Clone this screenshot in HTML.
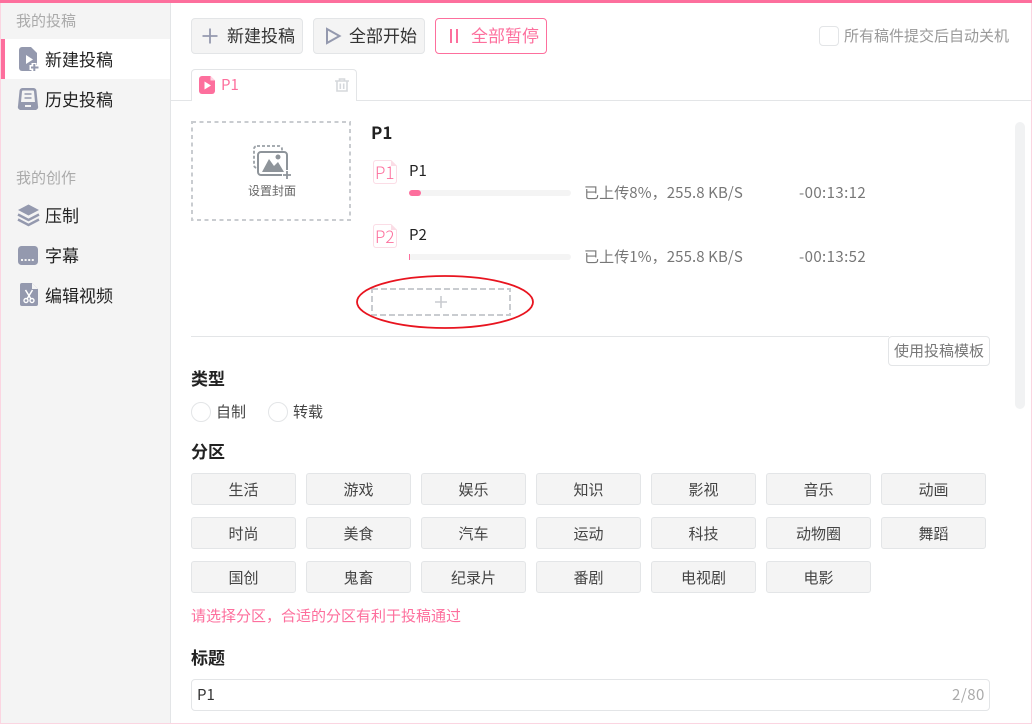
<!DOCTYPE html>
<html lang="zh">
<head>
<meta charset="utf-8">
<style>
*{box-sizing:border-box;margin:0;padding:0}
html,body{width:1032px;height:724px;overflow:hidden;background:#fff}
body{position:relative;font-family:"Noto Sans CJK SC","Liberation Sans",sans-serif;color:#222}
.a{position:absolute;white-space:nowrap}
.t{position:absolute;white-space:nowrap;line-height:20px}
.btn{position:absolute;top:18px;height:36px;width:112px;border:1px solid #e3e5e7;border-radius:4px;background:#f4f4f4}
.cat{position:absolute;width:105px;height:32px;border:1px solid #e3e5e7;border-radius:3px;background:#f4f4f4;font-size:15px;line-height:31px;text-align:center;color:#444}
.lab{font-size:17px;font-weight:700;color:#222}
svg{position:absolute;overflow:visible}
</style>
</head>
<body>
<!-- sidebar -->
<div class="a" style="left:0;top:0;width:171px;height:724px;background:#f4f4f4;border-right:1px solid #e3e5e7"></div>
<div class="a" style="left:1px;top:39px;width:169px;height:40px;background:#fff"></div>
<div class="a" style="left:1px;top:39px;width:4px;height:40px;background:#fd6f9d"></div>

<div class="t" style="left:16px;top:11px;font-size:15px;color:#aaa">我的投稿</div>
<div class="t" style="left:45px;top:49px;font-size:17px;color:#222">新建投稿</div>
<div class="t" style="left:45px;top:89px;font-size:17px;color:#222">历史投稿</div>
<div class="t" style="left:16px;top:168px;font-size:15px;color:#aaa">我的创作</div>
<div class="t" style="left:45px;top:205px;font-size:17px;color:#222">压制</div>
<div class="t" style="left:45px;top:245px;font-size:17px;color:#222">字幕</div>
<div class="t" style="left:45px;top:285px;font-size:17px;color:#222">编辑视频</div>

<!-- sidebar icons -->
<svg style="left:19px;top:47px" width="20" height="24" viewBox="0 0 20 24">
  <path d="M3 0H12L18 6V21A3 3 0 0 1 15 24H3A3 3 0 0 1 0 21V3A3 3 0 0 1 3 0Z" fill="#9499ae"/>
  <path d="M7 8L14 12.500L7 17Z" fill="#fff"/>
  <path d="M15 16V25M10.500 20.500H20" stroke="#fff" stroke-width="5"/>
  <path d="M15.300 17V24M12 20.500H19.500" stroke="#9499ae" stroke-width="2"/>
</svg>
<svg style="left:18px;top:88px" width="20" height="22" viewBox="0 0 20 22">
  <path d="M4.500 0H15.500A3 3 0 0 1 18.500 3L20 18A3 3 0 0 1 17 22H3A3 3 0 0 1 0 18L1.500 3A3 3 0 0 1 4.500 0Z" fill="#9499ae"/>
  <path d="M5 2.500H15A1 1 0 0 1 16 3.500L17 14H3L4 3.500A1 1 0 0 1 5 2.500Z" fill="#f4f4f4"/>
  <path d="M6.500 6H13.500M6.500 10H13.500" stroke="#9499ae" stroke-width="1.600"/>
  <rect x="7" y="17" width="6" height="2" fill="#f4f4f4"/>
</svg>
<svg style="left:17px;top:204px" width="23" height="23" viewBox="0 0 23 23">
  <path d="M11.500 0.500L22 6L11.500 11.500L1 6Z" fill="#9499ae"/>
  <path d="M1 10.500L11.500 16L22 10.500" fill="none" stroke="#9499ae" stroke-width="2.400"/>
  <path d="M1 15.500L11.500 21L22 15.500" fill="none" stroke="#9499ae" stroke-width="2.400"/>
</svg>
<svg style="left:18px;top:246px" width="20" height="19" viewBox="0 0 20 19">
  <rect width="20" height="19" rx="3.500" fill="#9499ae"/>
  <path d="M3 14H17" stroke="#f4f4f4" stroke-width="2" stroke-dasharray="2 1.600"/>
</svg>
<svg style="left:20px;top:283px" width="18" height="23" viewBox="0 0 18 23">
  <path d="M2 0H12L18 6V21A2 2 0 0 1 16 23H2A2 2 0 0 1 0 21V2A2 2 0 0 1 2 0Z" fill="#9499ae"/>
  <path d="M12 0L18 6H12Z" fill="#f4f4f4"/>
  <path d="M5.500 7L11 16M12.500 7L7 16" stroke="#fff" stroke-width="1.500"/>
  <circle cx="6" cy="17.500" r="2" fill="none" stroke="#fff" stroke-width="1.400"/>
  <circle cx="12" cy="17.500" r="2" fill="none" stroke="#fff" stroke-width="1.400"/>
</svg>

<!-- toolbar -->
<div class="btn" style="left:191px"></div>
<div class="btn" style="left:313px"></div>
<div class="btn" style="left:435px;background:#fff;border-color:#fd6f9d"></div>
<svg style="left:202px;top:28px" width="16" height="16" viewBox="0 0 16 16"><path d="M8 0.500V15.500M0.500 8H15.500" stroke="#9499ae" stroke-width="1.800"/></svg>
<svg style="left:326px;top:28px" width="15" height="16" viewBox="0 0 15 16"><path d="M1 1L13.500 8L1 15Z" fill="none" stroke="#9499ae" stroke-width="2"/></svg>
<svg style="left:449px;top:29px" width="10" height="14" viewBox="0 0 10 14"><path d="M2 0V14M8 0V14" stroke="#fd6f9d" stroke-width="2"/></svg>
<div class="t" style="left:227px;top:25px;font-size:17px;color:#333">新建投稿</div>
<div class="t" style="left:349px;top:25px;font-size:17px;color:#333">全部开始</div>
<div class="t" style="left:471px;top:25px;font-size:17px;color:#fd6f9d">全部暂停</div>
<div class="a" style="left:819px;top:26px;width:20px;height:20px;border:1px solid #e3e5e7;border-radius:4px;background:#fff"></div>
<div class="t" style="left:844px;top:26px;font-size:15px;color:#999">所有稿件提交后自动关机</div>

<!-- tab -->
<div class="a" style="left:171px;top:100px;width:861px;height:1px;background:#e3e5e7"></div>
<div class="a" style="left:191px;top:69px;width:166px;height:32px;border:1px solid #e3e5e7;border-bottom:none;border-radius:4px 4px 0 0;background:#fff"></div>
<svg style="left:199px;top:76px" width="17" height="18" viewBox="0 0 17 18">
  <path d="M3 0H11.500L16 4.500V15A3 3 0 0 1 13 18H3A3 3 0 0 1 0 15V3A3 3 0 0 1 3 0Z" fill="#fd6f9d"/>
  <path d="M11.500 0L16 4.500H11.500Z" fill="#fff" opacity=".7"/>
  <path d="M5.500 5.500L12 9.500L5.500 13.500Z" fill="#fff"/>
</svg>
<div class="t" style="left:221px;top:75px;font-size:15px;color:#fd6f9d">P1</div>
<svg style="left:335px;top:78px" width="14" height="14" viewBox="0 0 14 14">
  <path d="M0 3H14M4.500 3V1H9.500V3" fill="none" stroke="#d5d8dc" stroke-width="1.600"/>
  <path d="M2 3.500V13H12V3.500M5.300 5.500V11M8.700 5.500V11" fill="none" stroke="#d5d8dc" stroke-width="1.600"/>
</svg>

<!-- cover -->
<svg style="left:191px;top:121px" width="160" height="100"><rect x="1" y="1" width="158" height="98" fill="none" stroke="#c9ccd0" stroke-width="2" stroke-dasharray="4 3.500"/></svg>
<svg style="left:253px;top:145px" width="38" height="34" viewBox="0 0 38 34">
  <rect x="1" y="1" width="28" height="22" rx="3" fill="none" stroke="#9aa0a6" stroke-width="1.800" stroke-dasharray="3 2"/>
  <rect x="5" y="7" width="29" height="23" rx="3" fill="#fff" stroke="#8e949a" stroke-width="2"/>
  <path d="M9 27L16 14L21 21L25 17L31 27Z" fill="#8e949a"/>
  <circle cx="25" cy="12" r="2.500" fill="#8e949a"/>
  <path d="M34 25V35M29 30H38" stroke="#fff" stroke-width="4"/>
  <path d="M34 26V34M30 30H38" stroke="#8e949a" stroke-width="1.800"/>
</svg>
<div class="t" style="left:248px;top:181px;font-size:12px;color:#666">设置封面</div>

<!-- files -->
<div class="t" style="left:371px;top:122px;font-size:17px;font-weight:700;color:#222">P1</div>
<svg style="left:373px;top:160px" width="24" height="24" viewBox="0 0 24 24"><path d="M3 .5H18L23.500 6V21A2.500 2.500 0 0 1 21 23.500H3A2.500 2.500 0 0 1 .5 21V3A2.500 2.500 0 0 1 3 .5Z" fill="#fff" stroke="#fbdde6"/><path d="M18 .5V6H23.500Z" fill="#fbdde6"/></svg>
<svg style="left:373px;top:224px" width="24" height="24" viewBox="0 0 24 24"><path d="M3 .5H18L23.500 6V21A2.500 2.500 0 0 1 21 23.500H3A2.500 2.500 0 0 1 .5 21V3A2.500 2.500 0 0 1 3 .5Z" fill="#fff" stroke="#fbdde6"/><path d="M18 .5V6H23.500Z" fill="#fbdde6"/></svg>
<div class="t" style="left:375px;top:162px;font-size:17px;font-weight:300;color:#fd6f9d">P1</div>
<div class="t" style="left:375px;top:226px;font-size:17px;font-weight:300;color:#fd6f9d">P2</div>
<div class="t" style="left:409px;top:161px;font-size:15px;color:#222">P1</div>
<div class="t" style="left:409px;top:225px;font-size:15px;color:#222">P2</div>
<div class="a" style="left:409px;top:190px;width:162px;height:6px;border-radius:3px;background:#f4f4f4"></div>
<div class="a" style="left:409px;top:190px;width:12px;height:6px;border-radius:3px;background:#fd6f9d"></div>
<div class="a" style="left:409px;top:254px;width:162px;height:6px;border-radius:3px;background:#f4f4f4"></div>
<div class="a" style="left:409px;top:254px;width:1px;height:6px;background:#fd6f9d"></div>
<div class="t" style="left:584px;top:183px;font-size:15px;letter-spacing:.1px;color:#777">已上传8%，255.8 KB/S</div>
<div class="t" style="left:584px;top:247px;font-size:15px;letter-spacing:.1px;color:#777">已上传1%，255.8 KB/S</div>
<div class="t" style="left:799px;top:183px;font-size:15px;letter-spacing:.4px;color:#777">-00:13:12</div>
<div class="t" style="left:799px;top:247px;font-size:15px;letter-spacing:.4px;color:#777">-00:13:52</div>

<!-- add box and annotation -->
<svg style="left:371px;top:288px" width="140" height="28"><rect x="1" y="1" width="138" height="26" fill="none" stroke="#c9ccd0" stroke-width="2" stroke-dasharray="6 3"/><path d="M70 8V20M64 14H76" stroke="#c9ccd0" stroke-width="1.600"/></svg>
<svg style="left:350px;top:270px" width="190" height="64"><ellipse cx="95" cy="32" rx="88" ry="26" fill="none" stroke="#e8141f" stroke-width="1.800"/></svg>

<!-- divider -->
<div class="a" style="left:191px;top:336px;width:698px;height:1px;background:#e3e5e7"></div>
<div class="a" style="left:888px;top:336px;width:102px;height:30px;border:1px solid #e3e5e7;border-radius:4px;background:#fff"></div>
<div class="t" style="left:894px;top:341px;font-size:15px;color:#777">使用投稿模板</div>
<div class="a" style="left:1015px;top:122px;width:10px;height:287px;border-radius:5px;background:#f1f2f3"></div>

<!-- type -->
<div class="t lab" style="left:191px;top:368px">类型</div>
<div class="a" style="left:191px;top:402px;width:20px;height:20px;border:1px solid #e3e5e7;border-radius:50%"></div>
<div class="t" style="left:216px;top:402px;font-size:15px;color:#444">自制</div>
<div class="a" style="left:268px;top:402px;width:20px;height:20px;border:1px solid #e3e5e7;border-radius:50%"></div>
<div class="t" style="left:293px;top:402px;font-size:15px;color:#444">转载</div>

<!-- category -->
<div class="t lab" style="left:191px;top:441px">分区</div>
<div class="cat" style="left:191px;top:473px">生活</div>
<div class="cat" style="left:306px;top:473px">游戏</div>
<div class="cat" style="left:421px;top:473px">娱乐</div>
<div class="cat" style="left:536px;top:473px">知识</div>
<div class="cat" style="left:651px;top:473px">影视</div>
<div class="cat" style="left:766px;top:473px">音乐</div>
<div class="cat" style="left:881px;top:473px">动画</div>
<div class="cat" style="left:191px;top:517px">时尚</div>
<div class="cat" style="left:306px;top:517px">美食</div>
<div class="cat" style="left:421px;top:517px">汽车</div>
<div class="cat" style="left:536px;top:517px">运动</div>
<div class="cat" style="left:651px;top:517px">科技</div>
<div class="cat" style="left:766px;top:517px">动物圈</div>
<div class="cat" style="left:881px;top:517px">舞蹈</div>
<div class="cat" style="left:191px;top:561px">国创</div>
<div class="cat" style="left:306px;top:561px">鬼畜</div>
<div class="cat" style="left:421px;top:561px">纪录片</div>
<div class="cat" style="left:536px;top:561px">番剧</div>
<div class="cat" style="left:651px;top:561px">电视剧</div>
<div class="cat" style="left:766px;top:561px">电影</div>
<div class="t" style="left:191px;top:606px;font-size:15px;color:#fd6f9d">请选择分区，合适的分区有利于投稿通过</div>

<!-- title -->
<div class="t lab" style="left:191px;top:647px">标题</div>
<div class="a" style="left:191px;top:679px;width:799px;height:32px;border:1px solid #e3e5e7;border-radius:4px;background:#fff"></div>
<div class="t" style="left:197px;top:685px;font-size:15px;color:#333">P1</div>
<div class="t" style="left:952px;top:685px;font-size:15px;letter-spacing:.5px;color:#aaa">2/80</div>

<!-- window frame -->
<div class="a" style="left:0;top:0;width:1032px;height:3px;background:#fd6f9d"></div>
<div class="a" style="left:0;top:3px;width:1px;height:721px;background:#fbd5e1"></div>
<div class="a" style="left:1031px;top:3px;width:1px;height:721px;background:#fbd5e1"></div>
<div class="a" style="left:0;top:723px;width:1032px;height:1px;background:#fbd5e1"></div>
</body>
</html>
